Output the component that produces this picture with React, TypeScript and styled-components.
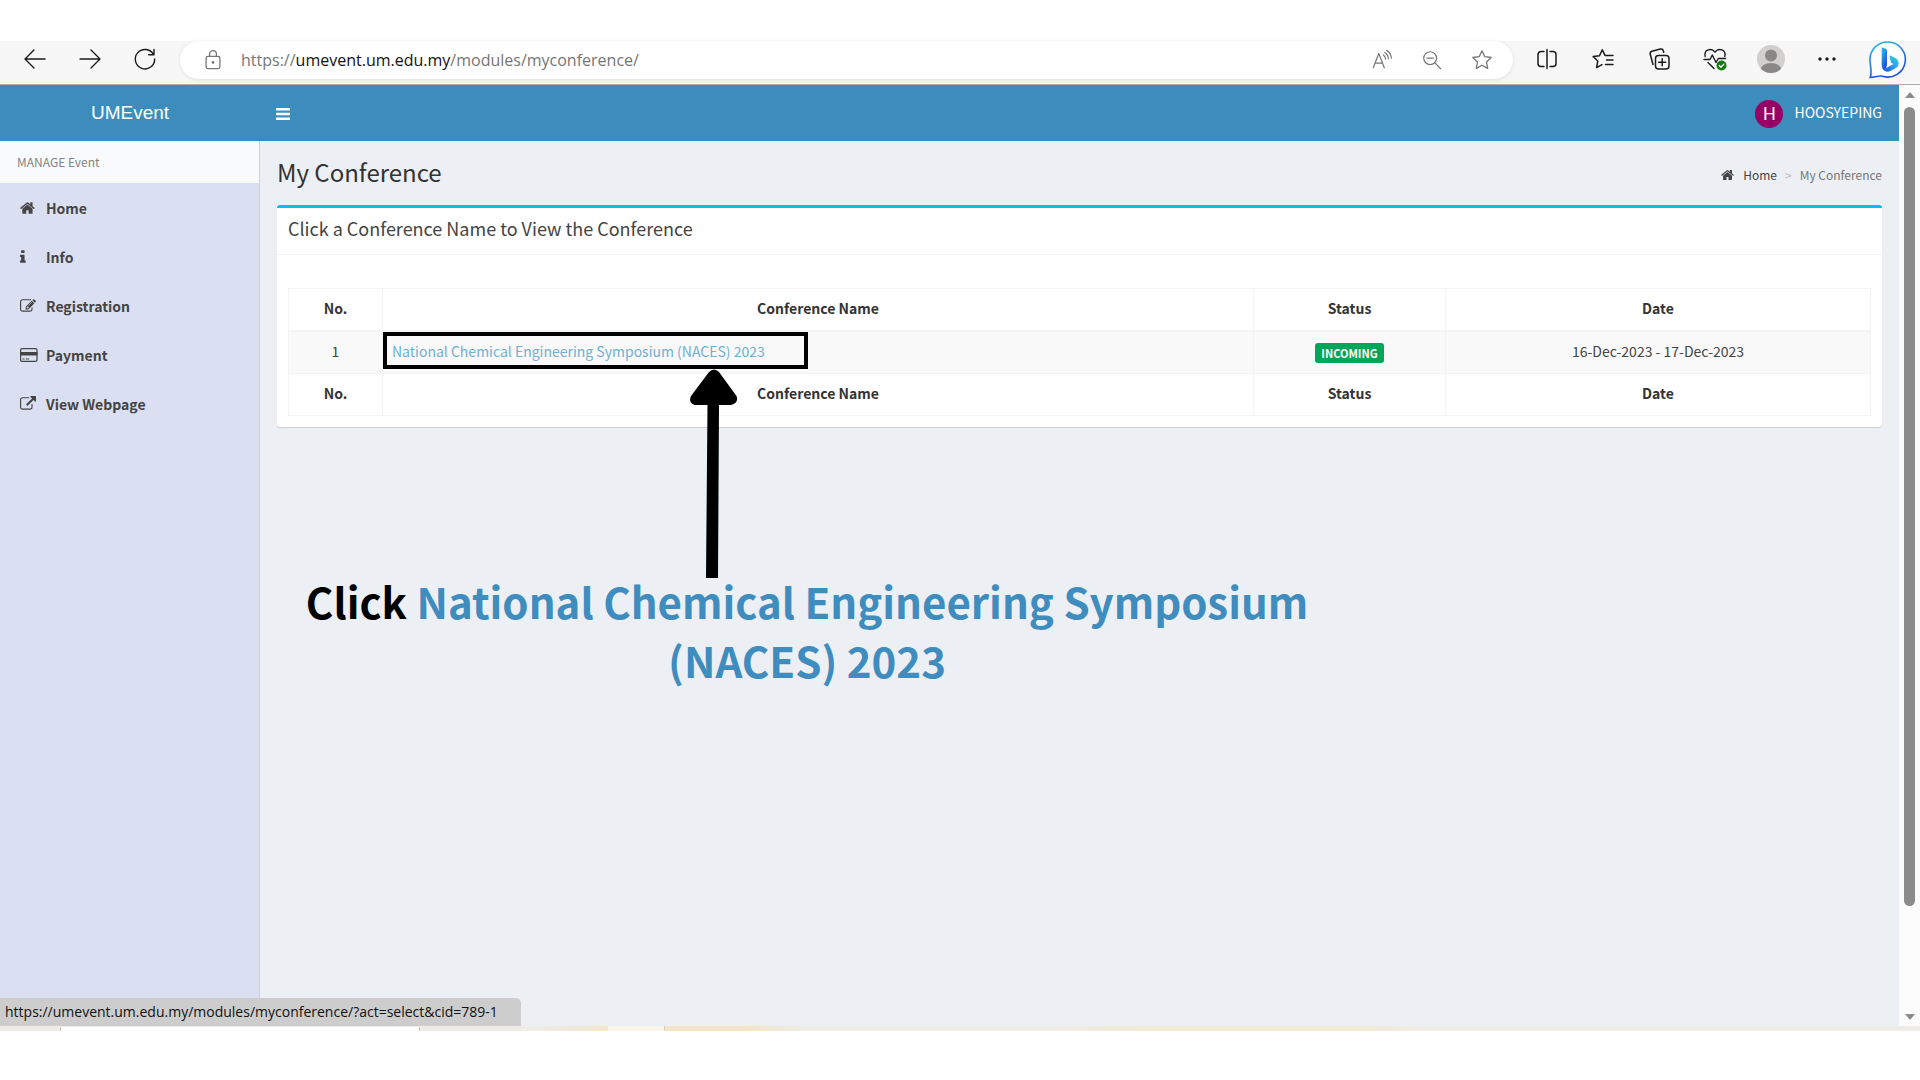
import React from "react";
import styled, { createGlobalStyle } from "styled-components";

const sans = `"Noto Sans CJK SC", "Noto Sans", sans-serif`;
const ui = `"Open Sans", "Noto Sans", sans-serif`;

const GlobalStyle = createGlobalStyle`
  *, *::before, *::after { box-sizing: border-box; }
  body { margin: 0; background: #fff; font-family: ${sans}; color: #444; }
  button { border: 0; padding: 0; background: none; font: inherit; color: inherit; cursor: pointer; }
  a { color: inherit; text-decoration: none; }
  svg { display: block; }
`;

const Screen = styled.div`
  display: flex;
  flex-direction: column;
  min-height: 100vh;
  padding: 41px 0 49px;
`;

/* Browser toolbar */
const Toolbar = styled.header`
  display: flex;
  align-items: flex-start;
  height: 44px;
  background: #f7f7f7;
  border-bottom: 1px solid #b0b0b0;
  color: #1b1b1b;
`;
const NavButtons = styled.div`
  display: flex;
  gap: 27px;
  padding: 0 21px;
`;
const ToolButton = styled.button<{ $wide?: boolean }>`
  display: grid;
  place-items: center;
  width: ${(p) => (p.$wide ? 38 : 28)}px;
  height: 36px;
`;
const AddressBar = styled.div`
  flex: 1;
  display: flex;
  align-items: center;
  height: 38px;
  padding: 0 17px 0 19px;
  border-radius: 19px;
  background: #fff;
  box-shadow: 0 1px 4px rgba(0, 0, 0, 0.1);
  color: #767676;
`;
const Url = styled.div`
  flex: 1;
  padding-left: 14px;
  font-family: ${ui};
  font-size: 16px;
  line-height: 34px;
  white-space: nowrap;
  b { font-weight: 400; color: #111; }
`;
const AddressActions = styled.div`
  display: flex;
  gap: 22px;
`;
const BrowserActions = styled.div`
  display: flex;
  gap: 28px;
  padding: 0 13px 0 20px;
`;

/* Web page */
const Viewport = styled.div`
  position: relative;
  flex: 1;
  display: flex;
`;
const Page = styled.div`
  flex: 1;
  display: grid;
  grid-template: 56px 1fr / 260px 1fr;
  background: #ecf0f5;
`;
const Brand = styled.a`
  display: grid;
  place-items: center;
  background: #3c8dbc;
  color: #fff;
  font-family: "Liberation Sans", Arial, sans-serif;
  font-size: 19px;
`;
const TopNav = styled.nav`
  display: flex;
  align-items: center;
  justify-content: space-between;
  padding: 2px 17px 0 9px;
  background: #3c8dbc;
  color: #fff;
`;
const User = styled.a`
  display: flex;
  align-items: flex-start;
  gap: 11px;
  font-size: 14px;
  line-height: 24px;
`;
const Avatar = styled.span`
  display: grid;
  place-items: center;
  width: 28px;
  height: 28px;
  border-radius: 50%;
  background: #990066;
  font-family: Roboto, sans-serif;
  font-size: 18px;
`;
const Sidebar = styled.aside`
  background: #dae0f2;
  border-right: 1px solid #cbd2de;
`;
const SidebarTitle = styled.div`
  padding-left: 17px;
  background: #f9fafc;
  color: #848484;
  font-size: 12px;
  line-height: 42px;
`;
const Menu = styled.ul`
  margin: 0;
  padding: 0;
  list-style: none;
`;
const MenuLink = styled.a`
  display: grid;
  grid-template-columns: 26px 1fr;
  align-items: center;
  height: 49px;
  padding-left: 20px;
  font-size: 14px;
  font-weight: 600;
`;

const Main = styled.main`
  position: relative;
  padding: 0 17px;
`;
const ContentHeader = styled.div`
  display: flex;
  align-items: center;
  justify-content: space-between;
  height: 64px;
  padding-bottom: 3px;
`;
const Title = styled.h1`
  margin: 0;
  font-size: 24px;
  font-weight: 400;
  line-height: 36px;
  color: #333;
`;
const Crumbs = styled.nav`
  display: flex;
  align-items: center;
  gap: 8px;
  padding-top: 6px;
  font-size: 12px;
  color: #777;
  a { display: flex; align-items: center; gap: 8px; color: #444; }
  i { font-style: normal; font-size: 12px; color: #bbb; }
`;
const Box = styled.section`
  border-top: 3px solid #00c0ef;
  border-radius: 3px;
  background: #fff;
  box-shadow: 0 1px 1px rgba(0, 0, 0, 0.15);
`;
const BoxTitle = styled.h2`
  margin: 0;
  padding: 0 11px 6px;
  border-bottom: 1px solid #f4f4f4;
  font-size: 18px;
  font-weight: 400;
  line-height: 40px;
`;
const BoxBody = styled.div`
  padding: 33px 11px 11px;
`;
const Table = styled.table`
  width: 100%;
  table-layout: fixed;
  border-collapse: collapse;
  font-size: 14px;
  line-height: 25px;
  text-align: center;
  th, td { padding: 7px 9px 9px; border: 1px solid #f4f4f4; }
  th { color: #333; }
  thead th { border-bottom-width: 2px; }
  tbody tr { background: #f9f9f9; }
`;
const NameCell = styled.td`
  position: relative;
  text-align: left;
  a { color: #72afd2; }
`;
const Badge = styled.span`
  display: inline-block;
  padding: 0 6px;
  border-radius: 3px;
  background: #00a65a;
  color: #fff;
  font-size: 11px;
  font-weight: 700;
  line-height: 20px;
  vertical-align: middle;
`;

/* Tutorial marks drawn over the page */
const Highlight = styled.span`
  position: absolute;
  top: 0;
  left: 0;
  width: 425px;
  height: 37px;
  border: 4px solid #000;
  pointer-events: none;
`;
const Arrow = styled.svg`
  position: absolute;
  top: 37px;
  left: 306px;
  pointer-events: none;
`;
const Caption = styled.p`
  position: absolute;
  top: 430px;
  left: 17px;
  width: 1060px;
  margin: 0;
  color: #000;
  font-size: 42px;
  font-weight: 700;
  line-height: 59px;
  text-align: center;
  span { color: #3f8dbe; }
`;

const Scrollbar = styled.div`
  display: flex;
  flex-direction: column;
  align-items: center;
  justify-content: space-between;
  width: 21px;
  padding: 7px 0 6px;
  background: #fcfcfc;
  color: #8b8b8b;
`;
const Track = styled.div`
  flex: 1;
  width: 11px;
  margin: 9px 0;
`;
const Thumb = styled.div`
  height: 89%;
  border-radius: 6px;
  background: #8b8b8b;
`;
const StatusBubble = styled.div`
  position: absolute;
  left: 0;
  bottom: 0;
  padding: 0 23px 0 5px;
  border-top-right-radius: 5px;
  background: #cdcdcd;
  color: #111;
  font-family: ${ui};
  font-size: 14px;
  line-height: 28px;
`;
const Taskbar = styled.footer`
  display: flex;
  height: 5px;
  background: linear-gradient(90deg, #eeece6 0 28%, #f3e6c8 32% 39%, #eeece6 42% 55%, #f3ead3 60% 71%, #eeece6 74%);
`;
const TaskSearch = styled.div`
  width: 360px;
  margin: 1px 0 0 60px;
  background: #fff;
  border: solid #c8c8c8;
  border-width: 0 1px;
`;
const TaskActive = styled.div`
  width: 57px;
  margin-left: 188px;
  border-right: 1px solid #d8d0bc;
  background: #fbf6ea;
`;

type IconProps = { size?: number; children: React.ReactNode; width?: number };
const Line = ({ size = 24, width = 1.4, children }: IconProps) => (
  <svg width={size} height={size} viewBox="0 0 24 24" fill="none" stroke="currentColor" strokeWidth={width} strokeLinecap="round" strokeLinejoin="round" aria-hidden="true">
    {children}
  </svg>
);
const Glyph = ({ d, size = 16, box = "0 0 1792 1792" }: { d: string; size?: number; box?: string }) => (
  <svg width={size} height={size} viewBox={box} fill="currentColor" aria-hidden="true"><path d={d} /></svg>
);

const home = "M1408 992v480q0 26-19 45t-45 19h-384v-384h-256v384h-384q-26 0-45-19t-19-45v-480q0-1 .5-3t.5-3l575-474 575 474q1 2 1 6zm223-69l-62 74q-8 9-21 11h-3q-13 0-21-7l-692-577-692 577q-12 8-24 7-13-2-21-11l-62-74q-8-10-7-23.5t11-21.5l719-599q32-26 76-26t76 26l244 204v-195q0-14 9-23t23-9h192q14 0 23 9t9 23v408l219 182q10 8 11 21.5t-7 23.5z";
const info = "M1216 1344v128q0 26-19 45t-45 19h-512q-26 0-45-19t-19-45v-128q0-26 19-45t45-19h64v-384h-64q-26 0-45-19t-19-45v-128q0-26 19-45t45-19h384q26 0 45 19t19 45v576h64q26 0 45 19t19 45zm-128-1152v192q0 26-19 45t-45 19h-256q-26 0-45-19t-19-45v-192q0-26 19-45t45-19h256q26 0 45 19t19 45z";
const edit = "M888 1184l116-116-152-152-116 116v56h96v96h56zm440-720q-16-16-33 1l-350 350q-17 17-1 33t33-1l350-350q17-17 1-33zm80 594v190q0 119-84.5 203.5t-203.5 84.5h-832q-119 0-203.5-84.5t-84.5-203.5v-832q0-119 84.5-203.5t203.5-84.5h832q63 0 117 25 15 7 18 23 3 17-9 29l-49 49q-14 14-32 8-23-6-45-6h-832q-66 0-113 47t-47 113v832q0 66 47 113t113 47h832q66 0 113-47t47-113v-126q0-13 9-22l64-64q15-15 35-7t20 29zm-96-738l288 288-672 672h-288v-288zm444 132l-92 92-288-288 92-92q28-28 68-28t68 28l152 152q28 28 28 68t-28 68z";
const external = "M1408 928v320q0 119-84.5 203.5t-203.5 84.5h-832q-119 0-203.5-84.5t-84.5-203.5v-832q0-119 84.5-203.5t203.5-84.5h704q14 0 23 9t9 23v64q0 14-9 23t-23 9h-704q-66 0-113 47t-47 113v832q0 66 47 113t113 47h832q66 0 113-47t47-113v-320q0-14 9-23t23-9h64q14 0 23 9t9 23zm384-864v512q0 26-19 45t-45 19-45-19l-176-176-652 652q-10 10-23 10t-23-10l-114-114q-10-10-10-23t10-23l652-652-176-176q-19-19-19-45t19-45 45-19h512q26 0 45 19t19 45z";

const CardIcon = () => (
  <svg width="18" height="16" viewBox="0 0 18 16" aria-hidden="true">
    <rect x="0.6" y="1.6" width="16.4" height="12.8" rx="1.4" fill="none" stroke="currentColor" strokeWidth="1.2" />
    <path d="M0 5h17.5v3.6H0zM2.4 11.4h2.2v1.2H2.4zM5.8 11.4h3.4v1.2H5.8z" fill="currentColor" />
  </svg>
);

const menu = [
  { label: "Home", icon: <Glyph d={home} /> },
  { label: "Info", icon: <Glyph d={info} box="576 0 1792 1792" /> },
  { label: "Registration", icon: <Glyph d={edit} /> },
  { label: "Payment", icon: <CardIcon /> },
  { label: "View Webpage", icon: <Glyph d={external} /> },
];

const Headings = () => (
  <tr><th>No.</th><th>Conference Name</th><th>Status</th><th>Date</th></tr>
);

const star = "M12 2.8l2.8 5.9 6.4.8-4.7 4.5 1.2 6.4-5.7-3.1-5.7 3.1 1.2-6.4L2.8 9.5l6.4-.8z";

const BrowserBar = () => (
  <Toolbar>
    <NavButtons>
      <ToolButton aria-label="Back"><Line><path d="M22 12H2.5M11 3l-9 9 9 9" /></Line></ToolButton>
      <ToolButton aria-label="Forward"><Line><path d="M2 12h19.5M13 3l9 9-9 9" /></Line></ToolButton>
      <ToolButton aria-label="Refresh"><Line><path d="M20.5 7.5A9.7 9.7 0 1 0 21.7 12M21 2.5v5.3h-5.3" /></Line></ToolButton>
    </NavButtons>
    <AddressBar>
      <ToolButton aria-label="Site information">
        <Line size={22}><rect x="4.5" y="8" width="15" height="13.5" rx="2" /><path d="M8.300 8V5.500a3.700 3.700 0 0 1 7.400 0V8" /><circle cx="12" cy="14.700" r=".8" fill="currentColor" /></Line>
      </ToolButton>
      <Url role="textbox" aria-label="Address">https://<b>umevent.um.edu.my</b>/modules/myconference/</Url>
      <AddressActions>
        <ToolButton aria-label="Read aloud"><Line size={22} width={1.3}><path d="M2.500 20.500L8.500 5l6 15.500M4.500 15.500h8M13.500 6.500c1.500 1 2.300 2.600 2.500 4.500M15 3.800c2.600 1.600 3.800 4.200 4 7M17 1.500c3.400 2 5 5 5.300 8.500" /></Line></ToolButton>
        <ToolButton aria-label="Zoom out"><Line size={22} width={1.3}><circle cx="10" cy="10" r="7" /><path d="M6.500 10h7M15.200 15.200l6.300 6.300" /></Line></ToolButton>
        <ToolButton aria-label="Add to favourites"><Line width={1.3}><path d={star} /></Line></ToolButton>
      </AddressActions>
    </AddressBar>
    <BrowserActions>
      <ToolButton aria-label="Split screen"><Line width={1.5}><path d="M9 4.500H6A3 3 0 0 0 3 7.500v9a3 3 0 0 0 3 3h3M15 4.500h3a3 3 0 0 1 3 3v9a3 3 0 0 1-3 3h-3M12 2.500v19" /></Line></ToolButton>
      <ToolButton aria-label="Favourites"><Line width={1.5}><path d="M14 8.400L11.300 2.800 8.500 8.700l-6.400.8L6.800 14l-1.200 6.700 5.400-3M14.500 8.500H22M15.500 13H22M14.500 17.500H22" /></Line></ToolButton>
      <ToolButton aria-label="Collections"><Line width={1.5}><rect x="8.500" y="8.500" width="13.500" height="13.500" rx="3" /><path d="M15.200 11.800v7M11.700 15.300h7M6 17.500L3.300 7.500C2.900 6 3.500 4.600 5 4.200l8.200-2.200c1.500-.4 2.800.4 3.200 2l.3 1.300" /></Line></ToolButton>
      <ToolButton aria-label="Browser essentials">
        <Line width={1.4}><path d="M1 12.500h6l2.300-4.500 3.700 7.500 2.300-4h7.200M2.200 9.500C.5 2.500 8.500.5 12 5.200 15.500.5 23.500 2.500 21.800 9.500M5 15.500l6 6" /><circle cx="18.500" cy="18.500" r="5" fill="#107c10" stroke="none" /><path d="M16.300 18.600l1.600 1.600 2.900-3" stroke="#fff" /></Line>
      </ToolButton>
      <ToolButton aria-label="Profile">
        <svg width="28" height="28" viewBox="0 0 28 28" aria-hidden="true">
          <clipPath id="profile"><circle cx="14" cy="14" r="14" /></clipPath>
          <g clipPath="url(#profile)"><path fill="#d2d0ce" d="M0 0h28v28H0z" /><circle cx="14" cy="10.500" r="6" fill="#8a8886" /><ellipse cx="14" cy="25" rx="10.500" ry="7" fill="#8a8886" /></g>
        </svg>
      </ToolButton>
      <ToolButton aria-label="More"><Line><g fill="currentColor" stroke="none"><circle cx="5" cy="12" r="1.700" /><circle cx="12" cy="12" r="1.700" /><circle cx="19" cy="12" r="1.700" /></g></Line></ToolButton>
      <ToolButton $wide aria-label="Bing chat">
        <svg width="38" height="38" viewBox="1 1.500 39 39" aria-hidden="true">
          <defs>
            <linearGradient id="bing" x1="0" y1="0" x2="0.5" y2="1"><stop offset="0" stopColor="#25c4f2" /><stop offset="1" stopColor="#1f4fd8" /></linearGradient>
            <linearGradient id="bingtail" x1="0" y1="1" x2="1" y2="0"><stop offset="0" stopColor="#1b48d6" /><stop offset="0.5" stopColor="#2a9df0" /><stop offset="1" stopColor="#35dfd0" /></linearGradient>
          </defs>
          <path d="M20.500 2.500a18 18 0 1 1-5.500 35.200c-3.500-1-5.500.5-12.800 1.300 2.300-4.500-.2-13-.2-18.500A18 18 0 0 1 20.500 2.500z" fill="#fff" stroke="url(#bing)" strokeWidth="1.700" />
          <path d="M14 8l4 1.400q1.500.6 1.500 2V26l-1.500 5q-4-.5-4-5z" fill="url(#bing)" />
          <path d="M22 16l5.500 2.600c5.500 2.500 4.500 8.700 1.500 10.400l-5.500 3c-4 2-8 1-9-3.500 2 2 4.500.5 6-.3l5.500-3.200-2.500-1.500z" fill="url(#bingtail)" />
        </svg>
      </ToolButton>
    </BrowserActions>
  </Toolbar>
);

export default function App() {
  return (
    <Screen>
      <GlobalStyle />
      <BrowserBar />
      <Viewport>
        <Page>
          <Brand href="#">UMEvent</Brand>
          <TopNav>
            <ToolButton aria-label="Toggle navigation">
              <svg width="14" height="12" viewBox="0 0 14 12" fill="currentColor" aria-hidden="true"><path d="M0 0h14v2.500H0zM0 4.750h14v2.500H0zM0 9.500h14V12H0z" /></svg>
            </ToolButton>
            <User href="#"><Avatar>H</Avatar>HOOSYEPING</User>
          </TopNav>
          <Sidebar>
            <SidebarTitle>MANAGE Event</SidebarTitle>
            <Menu>
              {menu.map((m) => (
                <li key={m.label}><MenuLink href="#">{m.icon}{m.label}</MenuLink></li>
              ))}
            </Menu>
          </Sidebar>
          <Main>
            <ContentHeader>
              <Title>My Conference</Title>
              <Crumbs aria-label="Breadcrumb">
                <a href="#"><Glyph d={home} size={14} />Home</a><i>&gt;</i><span>My Conference</span>
              </Crumbs>
            </ContentHeader>
            <Box>
              <BoxTitle>Click a Conference Name to View the Conference</BoxTitle>
              <BoxBody>
                <Table>
                  <colgroup><col width="94" /><col /><col width="192" /><col width="425" /></colgroup>
                  <thead><Headings /></thead>
                  <tbody>
                    <tr>
                      <td>1</td>
                      <NameCell>
                        <a href="#">National Chemical Engineering Symposium (NACES) 2023</a>
                        <Highlight />
                        <Arrow width="50" height="210" viewBox="0 0 50 210" aria-hidden="true">
                          <path d="M18.500 36L17 209H29L30 36H42Q50 34 47.500 27L30 3Q25-2 20 3L2 27Q-1 34 6 36z" />
                        </Arrow>
                      </NameCell>
                      <td><Badge>INCOMING</Badge></td>
                      <td>16-Dec-2023 - 17-Dec-2023</td>
                    </tr>
                  </tbody>
                  <tfoot><Headings /></tfoot>
                </Table>
              </BoxBody>
            </Box>
            <Caption>Click <span>National Chemical Engineering Symposium (NACES) 2023</span></Caption>
          </Main>
        </Page>
        <Scrollbar aria-hidden="true">
          <svg width="12" height="6" viewBox="0 0 12 6" fill="currentColor"><path d="M1 6l5-6 5 6z" /></svg>
          <Track><Thumb /></Track>
          <svg width="12" height="6" viewBox="0 0 12 6" fill="currentColor"><path d="M1 0l5 6 5-6z" /></svg>
        </Scrollbar>
        <StatusBubble>https://umevent.um.edu.my/modules/myconference/?act=select&amp;cid=789-1</StatusBubble>
      </Viewport>
      <Taskbar><TaskSearch /><TaskActive /></Taskbar>
    </Screen>
  );
}
